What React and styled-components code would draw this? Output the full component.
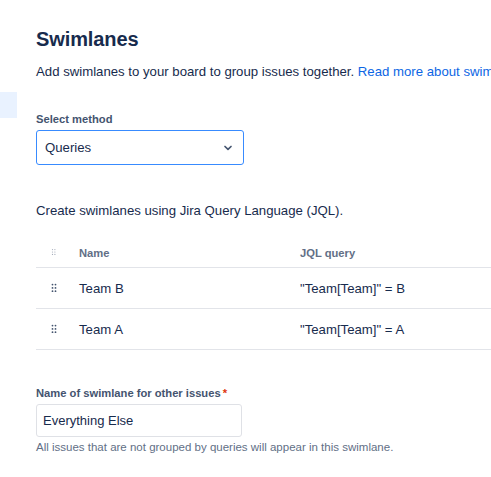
import React from "react";
import styled, { createGlobalStyle } from "styled-components";

const Global = createGlobalStyle`
  html, body { margin: 0; padding: 0; background: #fff; overflow: hidden; }
  body { font-family: "Liberation Sans", Arial, sans-serif; color: #172B4D; }
`;

const Page = styled.div`
  display: flex;
  width: 491px;
  height: 477px;
  overflow: hidden;
`;

const Sidebar = styled.nav`
  width: 17px;
  flex: none;
  padding-top: 92px;
`;

const NavItem = styled.div`
  height: 26px;
  background: ${(p) => (p.$active ? "#E9F2FF" : "transparent")};
`;

const Content = styled.main`
  flex: none;
  width: 560px;
  padding: 25px 0 0 19px;
  box-sizing: border-box;
`;

const Title = styled.h1`
  margin: 0;
  font-size: 20px;
  line-height: 28px;
  font-weight: 600;
  color: #172B4D;
  letter-spacing: -0.1px;
`;

const Text = styled.p`
  margin: ${(p) => p.$m || "0"};
  font-size: 13.2px;
  line-height: 20px;
  color: #172B4D;
  white-space: nowrap;
`;

const Link = styled.a`
  color: #0C66E4;
  text-decoration: none;
`;

const Label = styled.label`
  display: block;
  font-size: 11.2px;
  line-height: 16px;
  font-weight: 700;
  color: #44546F;
  margin: ${(p) => p.$m || "0"};
`;

const Required = styled.span`
  color: #DE350B;
  margin-left: 2px;
`;

const Select = styled.div`
  margin-top: 3px;
  width: 208px;
  height: 35px;
  box-sizing: border-box;
  border: 1px solid #388BFF;
  border-radius: 3px;
  display: flex;
  align-items: center;
  justify-content: space-between;
  padding: 0 10px 0 8px;
  font-size: 13.2px;
  color: #172B4D;
`;

const Table = styled.div`
  margin-top: 17px;
  width: 100%;
`;

const Row = styled.div`
  display: grid;
  grid-template-columns: 43px 221px 1fr;
  align-items: center;
  box-sizing: border-box;
  height: ${(p) => (p.$head ? "30px" : "41px")};
  border-bottom: 1.5px solid #E2E4E9;
  font-size: ${(p) => (p.$head ? "11.2px" : "13.2px")};
  font-weight: ${(p) => (p.$head ? 700 : 400)};
  color: ${(p) => (p.$head ? "#626F86" : "#172B4D")};
`;

const HandleCell = styled.div`
  display: flex;
  justify-content: flex-start;
  padding-left: 14px;
`;

const Input = styled.div`
  margin-top: 3px;
  width: 206px;
  height: 33px;
  box-sizing: border-box;
  border: 1px solid #DFE1E6;
  border-radius: 3px;
  display: flex;
  align-items: center;
  padding: 0 6px;
  font-size: 13px;
  color: #172B4D;
`;

const Helper = styled.div`
  margin-top: 3px;
  font-size: 11.5px;
  line-height: 14px;
  color: #626F86;
  white-space: nowrap;
`;

const Handle = ({ small }) => {
  const r = small ? 0.6 : 0.9;
  const c = small ? "#A5ADBA" : "#44546F";
  const dx = small ? 2.4 : 3;
  const dy = small ? 2.4 : 3.3;
  return (
    <svg width="8" height="10" viewBox="0 0 8 10">
      {[0, 1, 2].map((i) =>
        [0, 1].map((j) => (
          <circle key={`${i}${j}`} cx={2.5 + j * dx} cy={1.6 + i * dy} r={r} fill={c} />
        ))
      )}
    </svg>
  );
};

const Chevron = () => (
  <svg width="10" height="8" viewBox="0 0 10 8">
    <path d="M2 2.5 L5 5.3 L8 2.5" fill="none" stroke="#44546F" strokeWidth="1.7" strokeLinecap="round" strokeLinejoin="round" />
  </svg>
);

const rows = [
  { name: "Team B", q: '"Team[Team]" = B' },
  { name: "Team A", q: '"Team[Team]" = A' },
];

export default function App() {
  return (
    <>
      <Global />
      <Page>
        <Sidebar>
          <NavItem $active />
        </Sidebar>
        <Content>
          <Title>Swimlanes</Title>
          <Text $m="9px 0 0">
            Add swimlanes to your board to group issues together.{" "}
            <Link href="#">Read more about swimlanes</Link>
          </Text>
          <Label $m="29px 0 0">Select method</Label>
          <Select>
            <span>Queries</span>
            <Chevron />
          </Select>
          <Text $m="36px 0 0">Create swimlanes using Jira Query Language (JQL).</Text>
          <Table>
            <Row $head>
              <HandleCell><Handle small /></HandleCell>
              <div>Name</div>
              <div>JQL query</div>
            </Row>
            {rows.map((r) => (
              <Row key={r.name}>
                <HandleCell><Handle /></HandleCell>
                <div>{r.name}</div>
                <div>{r.q}</div>
              </Row>
            ))}
          </Table>
          <Label $m="35px 0 0">
            Name of swimlane for other issues<Required>*</Required>
          </Label>
          <Input>Everything Else</Input>
          <Helper>All issues that are not grouped by queries will appear in this swimlane.</Helper>
        </Content>
      </Page>
    </>
  );
}
